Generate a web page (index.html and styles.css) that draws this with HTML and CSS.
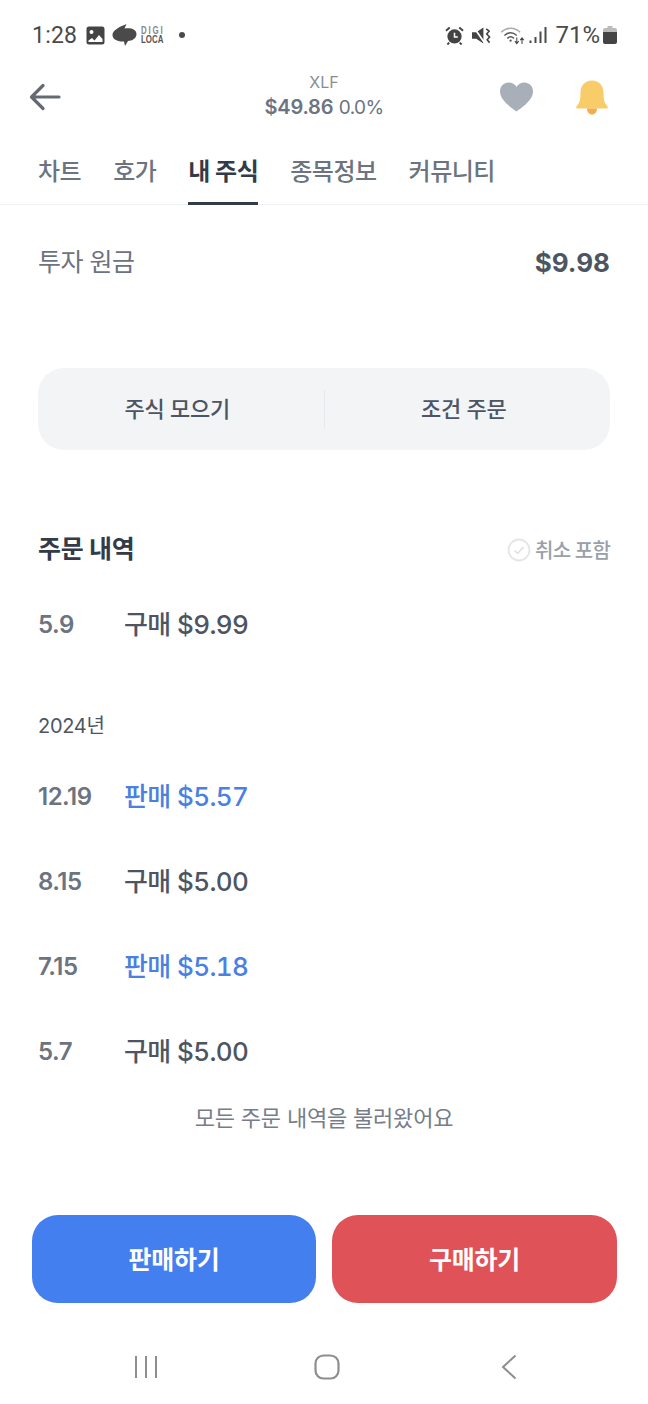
FILE: index.html
```html
<!DOCTYPE html>
<html lang="ko">
<head>
<meta charset="utf-8">
<title>XLF</title>
<link rel="stylesheet" href="styles.css">
</head>
<body>
<div class="page">
  <div class="status">
    <div class="status-left">
      <span class="time">1:28</span>
      <svg class="ic-photo" viewBox="0 0 19 19"><path fill-rule="evenodd" fill="#444" d="M3 0.5h13a2.500 2.500 0 0 1 2.500 2.500v13a2.500 2.500 0 0 1-2.500 2.500H3A2.500 2.500 0 0 1 .5 16V3A2.500 2.500 0 0 1 3 .5zM5.500 4a2 2 0 1 0 0 4 2 2 0 0 0 0-4zM2.500 14.500V16h14v-3l-3.500-4-4.500 5.500-2.500-2.500z"/></svg>
      <svg class="ic-talk" viewBox="0 0 25 22"><path fill="#4a4a4a" d="M14.500 0l-2 4.500c6-1 12 .5 12 5.500 0 4.500-4.500 6.800-8.500 7L13 22l-1-4.500c-6 .5-11.500-2-11.500-6.500C.5 6.500 7 3 14.500 0z"/></svg>
      <span class="digi"><span>DIGI</span><span>LOCA</span></span>
      <span class="dot"></span>
    </div>
    <div class="status-right">
      <svg class="ic-alarm" viewBox="0 0 20 20"><circle cx="10" cy="11" r="7.500" fill="#444"/><path d="M10 7v4.500h3.500" stroke="#fff" stroke-width="1.600" fill="none"/><path d="M1 5l4-3.500M19 5l-4-3.500M4.500 17.500l-2 2M15.500 17.500l2 2" stroke="#444" stroke-width="2"/></svg>
      <svg class="ic-mute" viewBox="0 0 20 20"><path fill="#444" d="M0 6.500h4.500L12 1.500v17l-7.500-5H0z"/><path d="M1 0l13 19" stroke="#fff" stroke-width="1.800"/><path d="M15 3l3 2.500-2.500 3 3 3-2.500 3 2.500 3" stroke="#444" stroke-width="1.700" fill="none"/></svg>
      <svg class="ic-wifi" viewBox="0 0 26 20"><path d="M1 6.500C7 1 15 1 21 6.500" stroke="#aaa" stroke-width="1.500" fill="none"/><path d="M4.500 10C8.500 6.500 13.500 6.500 17.500 10M7.500 13c2-1.800 5-1.800 7 0" stroke="#555" stroke-width="1.500" fill="none"/><circle cx="11" cy="15.500" r="1.200" fill="#555"/><path d="M17.500 12v6M15.500 16l2 2.500 2-2.500M23 19v-6M21 15l2-2.500 2 2.500" stroke="#444" stroke-width="1.100" fill="none"/></svg>
      <svg class="ic-signal" viewBox="0 0 18 18"><path d="M1.500 17v-2.500M6.500 17V11M11.500 17V5.500M16.500 17V1" stroke="#4a4a4a" stroke-width="2"/></svg>
      <span class="batt-text">71%</span>
      <svg class="ic-batt" viewBox="0 0 14 18"><path fill="#bbb" d="M4.500 0h5v2h2.500A2 2 0 0 1 14 4v3H0V4a2 2 0 0 1 2-2h2.500z"/><path fill="#444" d="M0 6h14v10a2 2 0 0 1-2 2H2a2 2 0 0 1-2-2z"/></svg>
    </div>
  </div>

  <header class="topbar">
    <svg class="ic-back" viewBox="0 0 32 28"><path d="M14 2.500L2.500 14 14 25.500M3 14h27" stroke="#656a72" stroke-width="3.200" stroke-linecap="round" stroke-linejoin="round" fill="none"/></svg>
    <div class="quote">
      <div class="ticker">XLF</div>
      <div class="price"><b>$49.86</b> <span class="change">0.0%</span></div>
    </div>
    <div class="actions">
      <svg class="ic-heart" viewBox="0 0 34 30"><path fill="#a8afb9" d="M17 29.500C14 27 .5 19 .5 9.500.5 4 4.500.5 9 .5c3.500 0 6.500 1.500 8 4.500 1.500-3 4.500-4.500 8-4.500 4.500 0 8.500 3.500 8.500 9 0 9.500-13.500 17.500-16.500 20z"/></svg>
      <svg class="ic-bell" viewBox="0 0 34 35"><path fill="#f9cc6a" d="M17 .5c7 0 11.500 5 11.500 12 0 8 1.200 10.500 3.500 13.300 1 1.300 1.500 2.700-1 2.700H3c-2.500 0-2-1.400-1-2.700C4.300 23 5.500 20.500 5.500 12.500 5.500 5.500 10 .5 17 .5z"/><path fill="#f5ac4c" d="M12 28.500h10c0 3.500-2 6-5 6s-5-2.500-5-6z"/></svg>
    </div>
  </header>

  <nav class="tabs">
    <span class="tab">차트</span>
    <span class="tab">호가</span>
    <span class="tab active">내 주식</span>
    <span class="tab">종목정보</span>
    <span class="tab">커뮤니티</span>
  </nav>

  <main class="content">
    <div class="principal">
      <span class="principal-label">투자 원금</span>
      <span class="principal-value">$9.98</span>
    </div>

    <div class="segment">
      <span class="seg-item">주식 모으기</span>
      <span class="seg-divider"></span>
      <span class="seg-item">조건 주문</span>
    </div>

    <div class="orders-head">
      <h2 class="orders-title">주문 내역</h2>
      <div class="cancel-toggle">
        <svg class="ic-check" viewBox="0 0 24 24"><circle cx="12" cy="12" r="10.500" stroke="#e3e5e8" stroke-width="1.800" fill="none"/><path d="M7.500 12.500l3.200 3 5.800-6.500" stroke="#dcdfe3" stroke-width="1.500" fill="none"/></svg>
        <span class="cancel-label">취소 포함</span>
      </div>
    </div>

    <div class="row first"><span class="date">5.9</span><span class="order">구매 $9.99</span></div>

    <div class="year">2024년</div>

    <div class="row"><span class="date">12.19</span><span class="order sell">판매 $5.57</span></div>
    <div class="row"><span class="date">8.15</span><span class="order">구매 $5.00</span></div>
    <div class="row"><span class="date">7.15</span><span class="order sell">판매 $5.18</span></div>
    <div class="row"><span class="date">5.7</span><span class="order">구매 $5.00</span></div>

    <p class="loaded">모든 주문 내역을 불러왔어요</p>
  </main>

  <div class="cta">
    <button class="btn btn-sell">판매하기</button>
    <button class="btn btn-buy">구매하기</button>
  </div>

  <div class="sysnav">
    <svg class="ic-recent" viewBox="0 0 24 24"><path d="M2 1v22M12 1v22M22 1v22" stroke="#8e8e8e" stroke-width="2"/></svg>
    <svg class="ic-home" viewBox="0 0 26 26"><rect x="1.500" y="1.500" width="23" height="23" rx="8" stroke="#8e8e8e" stroke-width="2.200" fill="none"/></svg>
    <svg class="ic-nback" viewBox="0 0 16 26"><path d="M14.500 1.500L2 13l12.500 11.500" stroke="#8e8e8e" stroke-width="2" fill="none"/></svg>
  </div>
</div>
</body>
</html>
```
FILE: styles.css
```css
* { box-sizing: border-box; }
html, body { margin: 0; padding: 0; background: #fff; }
body { font-family: Inter, "Noto Sans CJK KR", sans-serif; color: #4e5562; }
.page { width: 648px; height: 1404px; overflow: hidden; display: flex; flex-direction: column; }

.status { height: 70px; padding: 0 31px 0 32px; display: flex; align-items: center; justify-content: space-between; }
.status-left, .status-right { display: flex; align-items: center; }
.time { font-size: 23px; color: #4a4a4a; font-family: Roboto, sans-serif; letter-spacing: .2px; margin-right: 9px; }
.ic-photo { width: 19px; height: 19px; margin-right: 7px; }
.ic-talk { width: 25px; height: 22px; margin-right: 4px; }
.digi { display: flex; flex-direction: column; font: 700 11px/9.5px "Liberation Sans", sans-serif; color: #555; margin-right: 5px; transform: scaleX(.72); transform-origin: left center; }
.digi span:first-child { color: #888; letter-spacing: 2.5px; }
.dot { width: 6px; height: 6px; border-radius: 50%; background: #4a4a4a; }
.ic-alarm { width: 19px; height: 19px; margin-right: 8px; }
.ic-mute { width: 19px; height: 19px; margin-right: 9px; }
.ic-wifi { width: 25px; height: 19px; margin-right: 4px; }
.ic-signal { width: 18px; height: 18px; margin-right: 8px; }
.batt-text { font: 400 24px Roboto, sans-serif; color: #4a4a4a; margin-right: 3px; }
.ic-batt { width: 14px; height: 18px; }

.topbar { height: 54px; padding: 0 39px; display: grid; grid-template-columns: 1fr auto 1fr; align-items: center; }
.ic-back { width: 32px; height: 28px; margin-left: -10px; }
.quote { text-align: center; }
.ticker { font-size: 16px; line-height: 20px; color: #878d96; }
.price { font-size: 20px; line-height: 30px; color: #6b7480; letter-spacing: -.2px; }
.price b { font-weight: 600; }
.change { font-size: 19px; letter-spacing: -.6px; }
.actions { display: flex; align-items: center; gap: 41px; justify-self: end; }
.ic-heart { width: 35px; height: 30px; }
.ic-bell { width: 34px; height: 35px; }

.tabs { height: 57px; padding: 0 38px; border-bottom: 1px solid #f0f1f3; display: flex; gap: 32px; align-items: stretch; margin-top: 24px; flex: none; }
.tab { font-size: 24px; font-weight: 500; color: #6b7480; display: flex; align-items: center; letter-spacing: -.5px; padding-bottom: 15px; white-space: nowrap; margin-bottom: -1px; }
.tab.active { color: #333b48; font-weight: 700; border-bottom: 3px solid #333b48; padding-bottom: 12px; }

.content { padding: 0 38px; flex: 1; }
.principal { display: flex; justify-content: space-between; align-items: center; height: 32px; margin-top: 41px; }
.principal-label { font-size: 25px; color: #6b7480; letter-spacing: -.5px; padding-bottom: 4px; }
.principal-value { font-size: 26px; font-weight: 700; color: #4e5562; }

.segment { margin-top: 90px; height: 82px; border-radius: 26px; background: #f2f4f6; display: flex; align-items: center; }
.seg-item { flex: 1; text-align: center; font-size: 22px; font-weight: 500; color: #4e5562; letter-spacing: -.3px; padding: 0 7px 4px 0; }
.seg-divider { width: 1px; height: 38px; background: #e6e8eb; }

.orders-head { margin-top: 81px; height: 32px; display: flex; align-items: center; justify-content: space-between; }
.orders-title { margin: 0; font-size: 25px; font-weight: 700; color: #333b48; letter-spacing: -.3px; }
.cancel-toggle { display: flex; align-items: center; gap: 4px; font-size: 20px; font-weight: 500; color: #9aa0a9; letter-spacing: -.8px; }
.cancel-label { padding-top: 4px; }
.ic-check { width: 24px; height: 24px; margin-top: 6px; }

.row { height: 85px; display: flex; align-items: center; }
.row.first { height: 32px; margin-top: 43px; }
.date { width: 86px; font-size: 24px; font-weight: 600; color: #6b7480; letter-spacing: -.5px; padding-top: 4px; }
.order { font-size: 26px; font-weight: 500; color: #4e5562; letter-spacing: -.6px; font-variant-numeric: tabular-nums; }
.order.sell { color: #4a80e2; }
.year { margin-top: 76px; height: 24px; line-height: 24px; font-size: 20px; color: #4e5562; margin-bottom: 14px; letter-spacing: -.3px; }

.loaded { margin: 12px 0 0; text-align: center; font-size: 22px; line-height: 28px; color: #767d88; letter-spacing: -.2px; }

.cta { padding: 0 31px 0 32px; display: flex; gap: 16px; height: 88px; flex: none; }
.btn { flex: 1; border: 0; border-radius: 26px; color: #fff; font: 700 25px Inter, "Noto Sans CJK KR", sans-serif; letter-spacing: -.2px; padding-bottom: 4px; }
.btn-sell { background: #447ff0; flex: 0 0 284px; }
.btn-buy { background: #df5258; }

.sysnav { height: 101px; flex: none; padding: 26px 131px 0 134px; display: flex; align-items: center; justify-content: space-between; }
.ic-recent { width: 24px; height: 24px; }
.ic-home { width: 26px; height: 26px; margin-right: 6px; }
.ic-nback { width: 16px; height: 26px; }
```
